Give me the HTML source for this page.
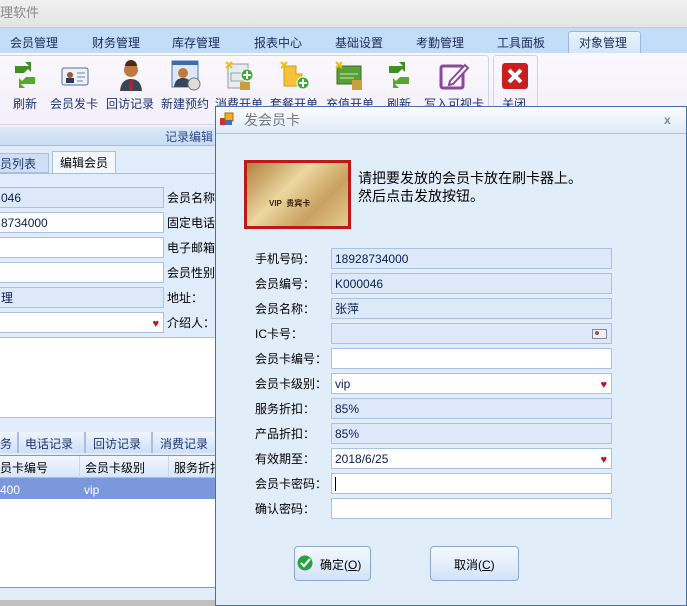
<!DOCTYPE html>
<html><head><meta charset="utf-8"><style>
*{margin:0;padding:0;box-sizing:border-box}
body{width:687px;height:606px;overflow:hidden;background:#dfeaf8;font-family:"Liberation Sans","Noto Sans CJK SC",sans-serif;font-size:12px;line-height:14px;color:#000;position:relative}
.a{position:absolute}
.t{white-space:nowrap}
.fld{position:absolute;height:21px;border:1px solid #a9c1e2;background:#dde9f9;padding-left:3px;display:flex;align-items:center;font-size:12px;line-height:14px;color:#0a1e50}
.w{background:#fff}
.heart{position:absolute;right:4px;top:4px;color:#c0141c;font-size:11px}
.lbl{position:absolute;font-size:12px;color:#000}
.rb{position:absolute;top:97px;color:#1c3470;font-size:12px;white-space:nowrap}
.tab{position:absolute;top:36px;color:#1c2a5a;font-size:12px}
</style></head><body>
<div class="a" style="left:0;top:0;width:687px;height:28px;background:linear-gradient(#f0f0f0,#e4e4e4);border-bottom:1px solid #c8c8c8"></div>
<div class="a t" style="left:0;top:6px;font-size:13px;color:#8a8a8a">理软件</div>
<div class="a" style="left:0;top:28px;width:687px;height:25px;background:#c3dcf7"></div>
<div class="tab" style="left:10px">会员管理</div>
<div class="tab" style="left:92px">财务管理</div>
<div class="tab" style="left:172px">库存管理</div>
<div class="tab" style="left:254px">报表中心</div>
<div class="tab" style="left:335px">基础设置</div>
<div class="tab" style="left:416px">考勤管理</div>
<div class="tab" style="left:497px">工具面板</div>
<div class="a" style="left:568px;top:31px;width:73px;height:23px;background:linear-gradient(#e8f2fd,#d4e6fb);border:1px solid #98b8e0;border-bottom:none;border-radius:3px 3px 0 0"></div>
<div class="tab" style="left:579px">对象管理</div>
<div class="a" style="left:0;top:53px;width:687px;height:74px;background:linear-gradient(#fbf8fd,#f3eef8)"></div>
<div class="a" style="left:0;top:55px;width:489px;height:70px;border:1px solid #c9d6ea;border-left:none;border-radius:0 3px 3px 0"></div>
<div class="a" style="left:493px;top:55px;width:45px;height:70px;border:1px solid #c9d6ea;border-radius:3px"></div>
<svg class="a" style="left:10px;top:60px" width="30" height="30"><path d="M5 6h14l-4-4h6v10l-3-3-4 4h-9z" fill="#3f8f22"/><path d="M25 24H11l4 4H9V18l3 3 4-4h9z" fill="#57a82c"/></svg>
<svg class="a" style="left:61px;top:67px" width="28" height="20"><rect x="1" y="1" width="26" height="17" rx="2" fill="#eef3fb" stroke="#4a6ea8"/><circle cx="9" cy="8" r="3" fill="#a05a2a"/><rect x="5" y="11" width="8" height="5" fill="#2a3a60"/><path d="M16 6h8M16 10h8M16 14h6" stroke="#6a84b0"/></svg>
<svg class="a" style="left:117px;top:60px" width="28" height="32"><circle cx="14" cy="10" r="7" fill="#c07a40"/><path d="M8 6a6 6 0 0 1 12 0" fill="#4a2a10"/><path d="M3 31q1-12 11-12t11 12z" fill="#3a4658"/><path d="M13 20h2l1 10h-4z" fill="#c02020"/></svg>
<svg class="a" style="left:170px;top:60px" width="32" height="32"><rect x="2" y="1" width="26" height="26" fill="#dce8f5" stroke="#4a78b8"/><rect x="2" y="1" width="26" height="4" fill="#3a6ab0"/><circle cx="13" cy="13" r="5" fill="#c07a40"/><path d="M4 27q1-9 9-9t9 9z" fill="#3a4658"/><circle cx="24" cy="24" r="6" fill="#ddd" stroke="#777"/></svg>
<svg class="a" style="left:224px;top:60px" width="32" height="32"><rect x="4" y="4" width="20" height="24" fill="#e6ecef" stroke="#999"/><rect x="7" y="13" width="14" height="8" fill="none" stroke="#8aa"/><circle cx="23" cy="15" r="6" fill="#3aa83a" stroke="#fff"/><path d="M23 11v8M19 15h8" stroke="#fff" stroke-width="2"/><rect x="16" y="22" width="10" height="8" fill="#c8a040"/><path d="M2 2l6 6M8 2l-6 6" stroke="#f0c000" stroke-width="2"/></svg>
<svg class="a" style="left:279px;top:60px" width="32" height="32"><path d="M5 6h12v8h6v12H5z" fill="#f5c23a" stroke="#d99a10"/><circle cx="24" cy="23" r="6" fill="#3aa83a" stroke="#fff"/><path d="M24 19v8M20 23h8" stroke="#fff" stroke-width="2"/><path d="M2 2l6 6M8 2l-6 6" stroke="#f0c000" stroke-width="2"/></svg>
<svg class="a" style="left:334px;top:60px" width="32" height="32"><rect x="3" y="6" width="24" height="18" fill="#5aa03a" stroke="#3a7020"/><path d="M6 14h18M6 18h14" stroke="#c8e8a0"/><rect x="18" y="20" width="10" height="10" fill="#c8a040"/><path d="M2 2l6 6M8 2l-6 6" stroke="#f0c000" stroke-width="2"/></svg>
<svg class="a" style="left:384px;top:60px" width="30" height="30"><path d="M5 6h14l-4-4h6v10l-3-3-4 4h-9z" fill="#3f8f22"/><path d="M25 24H11l4 4H9V18l3 3 4-4h9z" fill="#57a82c"/></svg>
<svg class="a" style="left:438px;top:60px" width="32" height="32"><rect x="3" y="6" width="22" height="22" rx="2" fill="none" stroke="#8a4a9a" stroke-width="3"/><path d="M12 21l15-16 3 3-15 16-4 1z" fill="#fff" stroke="#8a4a9a" stroke-width="2"/></svg>
<svg class="a" style="left:501px;top:62px" width="28" height="28"><rect x="1" y="1" width="26" height="26" rx="3" fill="#c82020"/><path d="M8 8l12 12M20 8L8 20" stroke="#fff" stroke-width="4"/></svg>
<div class="rb" style="left:13px">刷新</div>
<div class="rb" style="left:50px">会员发卡</div>
<div class="rb" style="left:106px">回访记录</div>
<div class="rb" style="left:161px">新建预约</div>
<div class="rb" style="left:215px">消费开单</div>
<div class="rb" style="left:270px">套餐开单</div>
<div class="rb" style="left:326px">充值开单</div>
<div class="rb" style="left:387px">刷新</div>
<div class="rb" style="left:424px">写入可视卡</div>
<div class="rb" style="left:502px">关闭</div>
<div class="a" style="left:0;top:127px;width:687px;height:19px;background:linear-gradient(#dbe8f8,#c9dcf4);border-bottom:1px solid #a8c0e0"></div>
<div class="a t" style="left:165px;top:130px;color:#2a4a8a">记录编辑</div>
<div class="a" style="left:0;top:146px;width:215px;height:460px;background:#e1ecfa"></div>
<div class="a" style="left:-2px;top:153px;width:51px;height:20px;background:#cfe0f6;border:1px solid #a8c0e0"></div>
<div class="a t" style="left:0;top:157px;color:#1c3470">员列表</div>
<div class="a" style="left:52px;top:151px;width:64px;height:23px;background:#f4f8fe;border:1px solid #a8c0e0;border-bottom:none"></div>
<div class="a t" style="left:60px;top:156px">编辑会员</div>
<div class="a" style="left:0;top:173px;width:215px;height:1px;background:#a8c0e0"></div>
<div class="fld" style="left:-3px;top:187px;width:167px">046</div>
<div class="fld w" style="left:-3px;top:212px;width:167px">8734000</div>
<div class="fld w" style="left:-3px;top:237px;width:167px"></div>
<div class="fld w" style="left:-3px;top:262px;width:167px"></div>
<div class="fld" style="left:-3px;top:287px;width:167px">理</div>
<div class="fld w" style="left:-3px;top:312px;width:167px"><span class="heart">♥</span></div>
<div class="lbl t" style="left:167px;top:191px">会员名称</div>
<div class="lbl t" style="left:167px;top:216px">固定电话</div>
<div class="lbl t" style="left:167px;top:241px">电子邮箱</div>
<div class="lbl t" style="left:167px;top:266px">会员性别</div>
<div class="lbl t" style="left:167px;top:291px">地址：</div>
<div class="lbl t" style="left:167px;top:316px">介绍人：</div>
<div class="a" style="left:0;top:337px;width:215px;height:81px;background:#fff;border-top:1px solid #a8c0e0;border-bottom:1px solid #a8c0e0"></div>
<div class="a" style="left:0;top:432px;width:215px;height:21px;background:linear-gradient(#eef4fd,#cfe0f6)"></div>
<div class="a t" style="left:0;top:437px;color:#1c3470">务</div>
<div class="a" style="left:17px;top:432px;width:2px;height:21px;background:#a8c0e0"></div>
<div class="a t" style="left:25px;top:437px;color:#1c3470">电话记录</div>
<div class="a" style="left:84px;top:432px;width:2px;height:21px;background:#a8c0e0"></div>
<div class="a t" style="left:93px;top:437px;color:#1c3470">回访记录</div>
<div class="a" style="left:151px;top:432px;width:2px;height:21px;background:#a8c0e0"></div>
<div class="a t" style="left:160px;top:437px;color:#1c3470">消费记录</div>
<div class="a" style="left:0;top:455px;width:215px;height:133px;background:#fff;border-top:1px solid #7a9ad0;border-bottom:1px solid #7a9ad0"></div>
<div class="a" style="left:0;top:456px;width:215px;height:22px;background:linear-gradient(#f2f7fe,#d6e6fa);border-bottom:1px solid #a8c0e0"></div>
<div class="a t" style="left:0;top:461px">员卡编号</div>
<div class="a" style="left:79px;top:456px;width:1px;height:43px;background:#c8d8ee"></div>
<div class="a t" style="left:85px;top:461px">会员卡级别</div>
<div class="a" style="left:168px;top:456px;width:1px;height:43px;background:#c8d8ee"></div>
<div class="a t" style="left:174px;top:461px">服务折扣</div>
<div class="a" style="left:0;top:478px;width:215px;height:21px;background:#7b98dc"></div>
<div class="a t" style="left:0;top:483px;color:#fff">400</div>
<div class="a t" style="left:84px;top:483px;color:#fff">vip</div>
<div class="a" style="left:0;top:600px;width:687px;height:6px;background:#c0c0c0"></div>
<div class="a" style="left:215px;top:106px;width:472px;height:500px;background:#e2edfa;border:1px solid #4a6ea8"></div>
<div class="a" style="left:216px;top:107px;width:470px;height:27px;background:linear-gradient(#fafcff,#dfeaf9);border-bottom:1px solid #a8c4e8"></div>
<svg class="a" style="left:220px;top:112px" width="14" height="14"><rect x="0" y="6" width="6" height="7" fill="#d03030"/><rect x="5" y="1" width="8" height="8" fill="#f0b020" stroke="#a07010"/><rect x="5" y="8" width="7" height="5" fill="#3a70c0"/></svg>
<div class="a t" style="left:244px;top:112px;font-size:14px;line-height:16px;color:#7a7a7a">发会员卡</div>
<div class="a t" style="left:664px;top:113px;font-size:12px;font-weight:bold;color:#7a8a9a">x</div>
<div class="a" style="left:244px;top:160px;width:107px;height:69px;background:#c01818;padding:3px"><div style="width:100%;height:100%;background:linear-gradient(135deg,#b08040,#ecd7a0 40%,#c9a060 70%,#e6cc90)"></div></div>
<div class="a t" style="left:269px;top:199px;font-size:8px;line-height:9px;font-weight:bold;color:#3a2010">VIP &nbsp;贵宾卡</div>
<div class="a t" style="left:358px;top:169px;font-size:14px;line-height:18px">请把要发放的会员卡放在刷卡器上。<br>然后点击发放按钮。</div>
<div class="lbl t" style="left:255px;top:252px">手机号码：</div>
<div class="lbl t" style="left:255px;top:277px">会员编号：</div>
<div class="lbl t" style="left:255px;top:302px">会员名称：</div>
<div class="lbl t" style="left:255px;top:327px">IC卡号：</div>
<div class="lbl t" style="left:255px;top:352px">会员卡编号：</div>
<div class="lbl t" style="left:255px;top:377px">会员卡级别：</div>
<div class="lbl t" style="left:255px;top:402px">服务折扣：</div>
<div class="lbl t" style="left:255px;top:427px">产品折扣：</div>
<div class="lbl t" style="left:255px;top:452px">有效期至：</div>
<div class="lbl t" style="left:255px;top:477px">会员卡密码：</div>
<div class="lbl t" style="left:255px;top:502px">确认密码：</div>
<div class="fld" style="left:331px;top:248px;width:281px">18928734000</div>
<div class="fld" style="left:331px;top:273px;width:281px">K000046</div>
<div class="fld" style="left:331px;top:298px;width:281px">张萍</div>
<div class="fld" style="left:331px;top:323px;width:281px"><svg class="a" style="right:4px;top:5px" width="15" height="10"><rect x=".5" y=".5" width="14" height="9" fill="#eef" stroke="#889"/><circle cx="5" cy="4" r="2" fill="#a05a2a"/></svg></div>
<div class="fld w" style="left:331px;top:348px;width:281px"></div>
<div class="fld w" style="left:331px;top:373px;width:281px">vip<span class="heart">♥</span></div>
<div class="fld" style="left:331px;top:398px;width:281px">85%</div>
<div class="fld" style="left:331px;top:423px;width:281px">85%</div>
<div class="fld w" style="left:331px;top:448px;width:281px">2018/6/25<span class="heart">♥</span></div>
<div class="fld w" style="left:331px;top:473px;width:281px"><span style="display:inline-block;width:1px;height:14px;background:#000"></span></div>
<div class="fld w" style="left:331px;top:498px;width:281px"></div>
<div class="a" style="left:294px;top:546px;width:77px;height:35px;background:linear-gradient(#f4f9ff,#d2e3f7);border:1px solid #8aa8d0;border-radius:4px"></div>
<svg class="a" style="left:297px;top:555px" width="16" height="16"><circle cx="8" cy="8" r="7.5" fill="#2aa040"/><path d="M4 8l3 3 6-7" stroke="#fff" stroke-width="2.2" fill="none"/></svg>
<div class="a t" style="left:320px;top:558px">确定(<u>O</u>)</div>
<div class="a" style="left:430px;top:546px;width:89px;height:35px;background:linear-gradient(#f4f9ff,#d2e3f7);border:1px solid #8aa8d0;border-radius:4px"></div>
<div class="a t" style="left:454px;top:558px">取消(<u>C</u>)</div>
</body></html>
